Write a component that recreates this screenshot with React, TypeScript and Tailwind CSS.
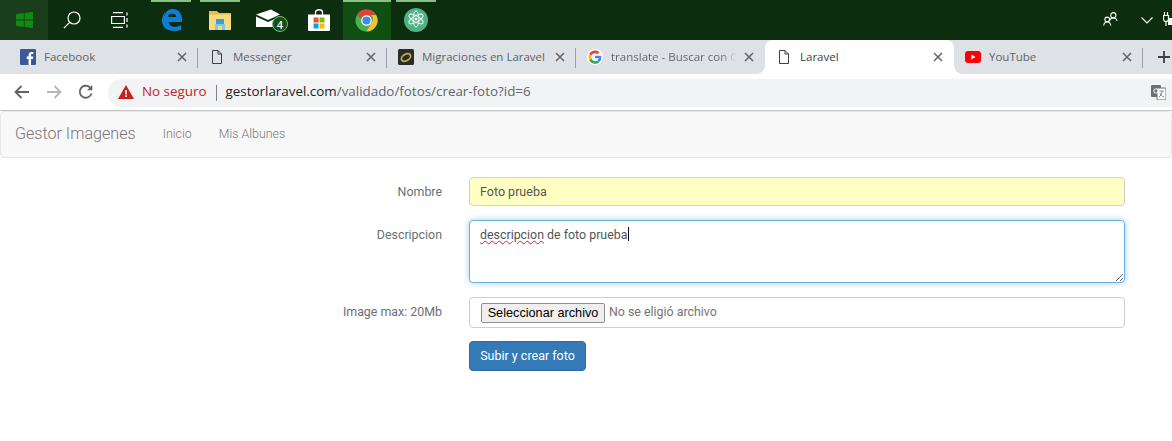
import React from "react";

const FileIcon = () => (
  <svg width="14" height="16" viewBox="0 0 14 16" fill="none" stroke="#3c4043" strokeWidth="1">
    <path d="M2.500 1.500h5.500l3.500 3.500v9.500h-9z M8 1.500v3.500h3.500" />
  </svg>
);

const Close = ({ color = "#5f6368" }: { color?: string }) => (
  <svg width="10" height="10" viewBox="0 0 10 10" stroke={color} strokeWidth="1.500" className="shrink-0">
    <path d="M1 1l8 8M9 1l-8 8" />
  </svg>
);

const FbIcon = () => (
  <svg width="16" height="16" viewBox="0 0 16 16">
    <rect width="16" height="16" rx="1" fill="#3b5998" />
    <path d="M11 16v-6h2l.3-2.400H11V6.200c0-.7.2-1.100 1.200-1.100h1.200V3c-.3 0-1-.1-1.800-.1-1.800 0-3 1.100-3 3.100v1.600H6.700V10h1.900v6z" fill="#fff" />
  </svg>
);

const GoogleIcon = () => (
  <svg width="16" height="16" viewBox="0 0 48 48">
    <circle cx="24" cy="24" r="24" fill="#fff" />
    <path fill="#EA4335" d="M24 12.500c3 0 5.600 1 7.600 3l5.700-5.700C33.800 6.600 29.300 4.600 24 4.600 16.400 4.600 9.900 9 6.700 15.300l6.600 5.100c1.600-4.600 5.800-7.900 10.700-7.900z" />
    <path fill="#4285F4" d="M43 24.500c0-1.300-.1-2.600-.3-3.900H24v7.500h10.800c-.5 2.500-1.900 4.500-4 6l6.400 5c3.700-3.500 5.800-8.600 5.800-14.600z" />
    <path fill="#FBBC05" d="M13.300 28.400c-.4-1.200-.6-2.500-.6-3.900s.2-2.700.6-3.900l-6.600-5.100C5.300 18.100 4.600 21.200 4.600 24.500s.7 6.400 2.100 9.100z" />
    <path fill="#34A853" d="M24 44.400c5.300 0 9.700-1.700 12.900-4.800l-6.400-5c-1.700 1.200-3.900 1.900-6.500 1.900-5 0-9.100-3.300-10.700-7.800l-6.600 5C9.900 40 16.400 44.400 24 44.400z" />
  </svg>
);

const YtIcon = () => (
  <svg width="16" height="12" viewBox="0 0 16 12">
    <rect width="16" height="12" rx="3" fill="#ff0000" />
    <path d="M6.300 3.500v5l4.300-2.500z" fill="#fff" />
  </svg>
);

const MigIcon = () => (
  <svg width="16" height="16" viewBox="0 0 16 16">
    <rect width="16" height="16" rx="1.500" fill="#2b2b2b" />
    <ellipse cx="8" cy="8.500" rx="5" ry="3.200" transform="rotate(-30 8 8.500)" fill="none" stroke="#b9b24a" strokeWidth="1.800" />
  </svg>
);

type TabProps = { title: string; icon: React.ReactNode; active?: boolean; sep?: boolean; fade?: boolean };

const Tab = ({ title, icon, active, sep, fade }: TabProps) => (
  <div className={`relative flex w-[189px] shrink-0 items-center gap-[8px] pl-[11px] pr-[11px] ${active ? "h-[38px] self-start rounded-t-lg bg-white pb-[4px]" : "h-[34px]"}`}>
    {active && (
      <>
        <span className="absolute bottom-[4px] left-[-8px] h-2 w-2 bg-[radial-gradient(circle_at_0_0,#dee1e6_7.5px,#ffffff_8px)]" />
        <span className="absolute bottom-[4px] right-[-8px] h-2 w-2 bg-[radial-gradient(circle_at_100%_0,#dee1e6_7.5px,#ffffff_8px)]" />
      </>
    )}
    <span className="flex w-4 shrink-0 justify-center">{icon}</span>
    <span className={`min-w-0 flex-1 whitespace-nowrap text-[11.500px] ${active ? "text-[#3c4043]" : "text-[#5f6368]"}`}>
      {fade ? (
        <span className="block bg-gradient-to-r from-[#5f6368] from-88% to-[#dee1e6] bg-clip-text text-transparent">{title}</span>
      ) : (
        title
      )}
    </span>
    <Close />
    {sep && <span className="absolute right-0 top-2 h-[20px] w-px bg-[#9aa0a6]" />}
  </div>
);

const TaskItem = ({ children, width, active, bar }: { children: React.ReactNode; width: string; active?: boolean; bar?: string }) => (
  <div className={`relative flex h-10 items-center justify-center ${width} ${active ? "bg-[#0f4f12]" : ""}`}>
    {bar && <span className={`absolute top-0 h-[2px] bg-[#8abf86] ${bar}`} />}
    {children}
  </div>
);

const Row = ({ label, children }: { label: string; children: React.ReactNode }) => (
  <div className="flex gap-[27px]">
    <label className="w-[442px] shrink-0 pt-[6px] text-right text-[12.400px] leading-[17px] text-[#6b7074]">{label}</label>
    {children}
  </div>
);

export default function App() {
  return (
    <div className="h-[441px] w-[1172px] overflow-hidden bg-white font-['Open_Sans',sans-serif]">
      {/* Taskbar */}
      <div className="flex h-10 items-center bg-[#0d2e0e]">
        <div className="flex h-10 w-12 items-center justify-center bg-[#1a3d1b]">
          <svg width="17" height="16" viewBox="0 0 17 16" fill="#0f8a12">
            <path d="M0 2.200l7.800-1.200v6.600H0zM8.700.9L17 0v7.600H8.700zM0 8.400h7.800V15L0 13.800zM8.700 8.400H17V16l-8.300-1z" />
          </svg>
        </div>
        <div className="flex h-10 w-12 items-center justify-center">
          <svg width="20" height="20" viewBox="0 0 20 20" fill="none" stroke="#fff" strokeWidth="1.200">
            <circle cx="12" cy="8" r="6" />
            <path d="M7.700 12.300L2 18" />
          </svg>
        </div>
        <div className="flex h-10 w-12 items-center justify-center">
          <svg width="18" height="16" viewBox="0 0 18 16" fill="none" stroke="#fff" strokeWidth="1.200">
            <path d="M2 .6h10M2 15.400h10M.6 4.500h12.800v7H.6zM16 .5v3M16 6v4M16 12.500v3" />
          </svg>
        </div>
        <TaskItem width="w-[55px]" bar="left-[7px] w-10">
          <svg width="20" height="22" viewBox="0 0 20 22">
            <path fill="#0a7fd8" d="M10.500 0C16.500 0 20 4.500 20 10.500v2.500H6.500c.4 3 2.800 4.800 6 4.800 2.600 0 4.800-.7 6.500-1.900V20.500c-1.700 1-4.200 1.500-6.800 1.500C5 22 0 18 0 11.500 0 8 1.300 4.800 3.500 3 2.800 4.400 2.300 5.700 2.200 7c1.500-2 4-3 6-3-1.200 1-2 2.300-2 4h8c0-2-1.400-3.200-4-3.200C7 4.800 4.500 6 2.500 8 3 3.500 6 0 10.500 0z" />
          </svg>
        </TaskItem>
        <TaskItem width="w-[44px]" bar="left-[1px] w-10">
          <svg width="22" height="19" viewBox="0 0 22 19" className="mr-[3px]">
            <path fill="#e9b949" d="M0 0h8l2 2h12v17H0z" />
            <path fill="#f7da7a" d="M0 3.500h22V19H0z" />
            <path fill="#3aa0d8" d="M7 8h8v5H7z" />
            <path fill="#7cc8ee" d="M6 13h10v6H6z" />
            <path fill="#f7da7a" d="M9 15h4v4H9z" />
          </svg>
        </TaskItem>
        <TaskItem width="w-[54px]">
          <div className="relative mt-[-2px] h-5 w-6">
            <svg width="24" height="20" viewBox="0 0 24 20" className="ml-[-2px]">
              <path fill="#fff" d="M0 5.500L15 .5 24 5.500 12 11zM0 7.500L12 13l12-5.500V18H0z" />
            </svg>
            <span className="absolute -right-[6px] top-[7px] flex h-4 w-4 items-center justify-center rounded-full border border-[#6fbf73] bg-[#174d1a] text-[11px] font-semibold leading-none text-white">4</span>
          </div>
        </TaskItem>
        <TaskItem width="w-[46px]">
          <svg width="24" height="24" viewBox="0 0 24 24" className="mr-[3px]">
            <path fill="none" stroke="#fff" strokeWidth="1.300" d="M8.500 7V4c0-3 7-3 7 0v3" />
            <path fill="#fff" d="M1 6.500h22V22a1 1 0 0 1-1 1H2a1 1 0 0 1-1-1z" />
            <path fill="#f25022" d="M6.500 9.500h5v5h-5z" />
            <path fill="#7fba00" d="M12.500 9.500h5v5h-5z" />
            <path fill="#00a4ef" d="M6.500 15.500h5v5h-5z" />
            <path fill="#ffb900" d="M12.500 15.500h5v5h-5z" />
          </svg>
        </TaskItem>
        <TaskItem width="w-12" active bar="left-0 w-12">
          <svg width="23" height="23" viewBox="0 0 48 48" className="mr-[2px]">
            <circle cx="24" cy="24" r="23" fill="#4caf50" />
            <path fill="#db4437" d="M24 1a23 23 0 0 1 20 11.500H24a11.500 11.500 0 0 0-10.800 7.500L4 12.500A23 23 0 0 1 24 1z" />
            <path fill="#fbc02d" d="M44 12.500A23 23 0 0 1 24 47l10-17.300a11.500 11.500 0 0 0 0-17.200z" />
            <circle cx="24" cy="24" r="11" fill="#fff" />
            <circle cx="24" cy="24" r="8.500" fill="#4285f4" />
          </svg>
        </TaskItem>
        <TaskItem width="w-[50px]" bar="left-[5px] w-10">
          <svg width="24" height="24" viewBox="0 0 24 24">
            <circle cx="12" cy="12" r="12" fill="#4fb286" />
            <g fill="none" stroke="#e8f5e9" strokeWidth="1">
              <ellipse cx="12" cy="11" rx="8" ry="3" transform="rotate(30 12 11)" />
              <ellipse cx="12" cy="11" rx="8" ry="3" transform="rotate(-30 12 11)" />
              <ellipse cx="12" cy="11" rx="8" ry="3" transform="rotate(90 12 11)" />
            </g>
            <circle cx="12" cy="11" r="1.500" fill="#fff" />
          </svg>
        </TaskItem>
        <div className="flex-1" />
        <svg width="15" height="16" viewBox="0 0 16 16" fill="none" stroke="#fff" strokeWidth="1.100" className="mb-[2px] mr-[23px] shrink-0">
          <circle cx="11" cy="4" r="2.800" />
          <path d="M7 10c.5-2 2-3 4-3s3.500 1 4 3" />
          <circle cx="4.500" cy="8.500" r="2.500" />
          <path d="M.7 15c.3-2.200 1.800-3.700 3.800-3.700S8 12.800 8.300 15" />
        </svg>
        <svg width="12" height="7" viewBox="0 0 12 7" fill="none" stroke="#fff" strokeWidth="1.100" className="mr-[10px] shrink-0">
          <path d="M.5.500L6 6 11.500.500" />
        </svg>
        <svg width="9" height="16" viewBox="0 0 9 16" fill="none" stroke="#fff" strokeWidth="1.200" className="shrink-0">
          <path d="M1.500 0v3M4.500 0v3M.5 3.500h5V7a2.500 2.500 0 0 1-5 0zM3 9.500V14" />
          <rect x="5" y="6" width="5" height="7" fill="#fff" stroke="none" />
        </svg>
      </div>

      {/* Tab strip */}
      <div className="flex h-[34px] bg-[#dee1e6] pl-[9px]">
        <Tab title="Facebook" icon={<FbIcon />} sep />
        <Tab title="Messenger" icon={<FileIcon />} sep />
        <Tab title="Migraciones en Laravel" icon={<MigIcon />} sep />
        <Tab title="translate - Buscar con G" icon={<GoogleIcon />} fade />
        <Tab title="Laravel" icon={<FileIcon />} active />
        <Tab title="YouTube" icon={<YtIcon />} sep />
        <div className="flex h-[34px] flex-1 items-center justify-end pr-[2px]">
          <svg width="12" height="12" viewBox="0 0 12 12" stroke="#3c4043" strokeWidth="1.800">
            <path d="M6 0v12M0 6h12" />
          </svg>
        </div>
      </div>

      {/* Toolbar */}
      <div className="flex h-[37px] items-center border-b border-[#c4c7c9] bg-white pb-[2px] pt-[4px]">
        <div className="mb-[2px] flex w-[108px] shrink-0 items-center">
          <svg width="16" height="14" viewBox="0 0 16 14" fill="none" stroke="#5f6368" strokeWidth="1.800" className="ml-[14px]">
            <path d="M15 7H2M7.500 1L1.500 7l6 6" />
          </svg>
          <svg width="16" height="14" viewBox="0 0 16 14" fill="none" stroke="#b5b8bb" strokeWidth="1.800" className="ml-[16px]">
            <path d="M1 7h13M8.500 1l6 6-6 6" />
          </svg>
          <svg width="16" height="16" viewBox="0 0 16 16" fill="none" stroke="#5f6368" strokeWidth="1.800" className="ml-[16px]">
            <path d="M13.500 9.500A6 6 0 1 1 12 3.500" />
            <path d="M14.300 1v5.200H9.100z" fill="#5f6368" stroke="none" />
          </svg>
        </div>
        <div className="flex h-[28px] flex-1 items-center rounded-l-[14px] bg-[#f1f3f4] pl-[10px] text-[13.400px]">
          <svg width="16" height="14" viewBox="0 0 16 14" className="mb-[3px]">
            <path d="M8 0l8 14H0z" fill="#c5221f" />
            <path d="M7.200 5h1.600v4.500H7.200zM7.200 10.300h1.600v1.600H7.200z" fill="#fff" />
          </svg>
          <span className="mb-[4px] ml-[8px] text-[#c5221f]">No seguro</span>
          <span className="mx-[9px] mb-[1px] h-[16px] w-px bg-[#80868b]" />
          <span className="mb-[4px] text-[#202124]">gestorlaravel.com</span>
          <span className="mb-[4px] text-[#5f6368]">/validado/fotos/crear-foto?id=6</span>
          <div className="flex-1" />
          <svg width="15" height="15" viewBox="0 0 15 15" className="mb-[1px] mr-[6px]">
            <rect x="0" y="0" width="10" height="12" rx="1" fill="#6a6f74" />
            <rect x="6" y="3" width="9" height="12" rx="1" fill="#fff" stroke="#6a6f74" />
            <path d="M8.500 6h4.500M11 6c0 3-1.500 5-3 6M9 8c.5 2 2 3.500 4 4" stroke="#6a6f74" strokeWidth="0.800" fill="none" />
            <circle cx="5" cy="6" r="2.200" fill="none" stroke="#fff" />
          </svg>
        </div>
      </div>

      {/* Navbar */}
      <div className="flex h-[47px] items-center rounded border border-[#e7e7e7] bg-[#f8f8f8] pb-[1px] pl-[14px] font-['Roboto',sans-serif]">
        <span className="text-[16.100px] font-light leading-[20px] text-[#777777]">Gestor Imagenes</span>
        <span className="ml-[27px] text-[12.400px] font-light text-[#777777]">Inicio</span>
        <span className="ml-[27px] text-[12.400px] font-light text-[#777777]">Mis Albunes</span>
      </div>

      {/* Form */}
      <div className="flex flex-col gap-[14px] pt-[19px] font-['Roboto',sans-serif]">
        <Row label="Nombre">
          <div className="flex h-[29px] w-[656px] items-center rounded border border-[#ccd0d2] bg-[#ffffc4] px-[10px] pt-[1px] text-[12.500px] text-[#555555]">Foto prueba</div>
        </Row>
        <Row label="Descripcion">
          <div className="h-[63px] w-[656px] resize overflow-auto rounded border border-[#66afe9] bg-white px-[10px] py-[4px] text-[12.400px] leading-[17px] text-[#555555] shadow-[0_0_6px_rgba(102,175,233,0.6)]">
            <span className="underline decoration-wavy decoration-[#e02020] decoration-1 underline-offset-1">descripcion</span> de foto prueba
            <span className="ml-px inline-block h-[14px] w-px translate-y-[2px] bg-black" />
          </div>
        </Row>
        <Row label="Image max: 20Mb">
          <div className="flex h-[31px] w-[656px] items-center rounded border border-[#ccd0d2] bg-white pl-[11px] text-[12.400px] text-[#757575]">
            <button className="h-[20px] w-[124px] rounded-[2px] border border-[#8f8f8f] bg-[#efefef] pt-[1px] font-['Liberation_Sans',sans-serif] text-[12.700px] leading-none text-black">Seleccionar archivo</button>
            <span className="ml-[4px]">No se eligió archivo</span>
          </div>
        </Row>
        <div className="mt-[-1px] flex gap-[27px]">
          <div className="w-[442px] shrink-0" />
          <button className="h-[30px] w-[117px] rounded border border-[#2e6da4] bg-[#337ab7] text-[12.500px] text-white">Subir y crear foto</button>
        </div>
      </div>
    </div>
  );
}
